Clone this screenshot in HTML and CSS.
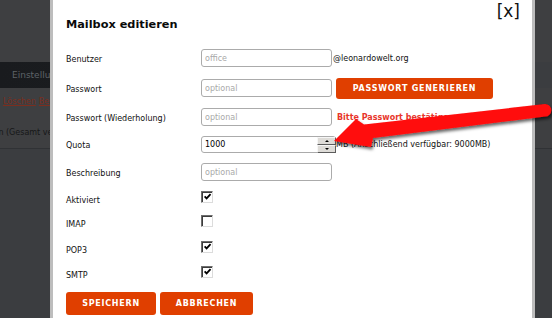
FILE: index.html
```html
<!DOCTYPE html>
<html lang="de">
<head>
<meta charset="utf-8">
<title>Mailbox editieren</title>
<link rel="stylesheet" href="styles.css">
</head>
<body>
<div class="page">
  <div class="page-top"></div>
  <div class="page-nav"><span class="nav-item">Einstellungen</span></div>
  <div class="page-actions"><a class="link">Löschen</a><a class="link">Bearbeiten</a></div>
  <div class="page-summary">Mailboxen (Gesamt verfügbar: 10000MB)</div>
  <div class="page-rule"></div>
</div>

<div class="modal">
  <button class="close" type="button">[x]</button>
  <h1 class="title">Mailbox editieren</h1>
  <form class="form">
    <div class="row row-30">
      <label class="label">Benutzer</label>
      <input class="field" type="text" placeholder="office">
      <span class="suffix suffix-domain">@leonardowelt.org</span>
    </div>
    <div class="row row-30">
      <label class="label">Passwort</label>
      <input class="field" type="text" placeholder="optional">
      <button class="btn btn-generate" type="button">PASSWORT GENERIEREN</button>
    </div>
    <div class="row row-28">
      <label class="label">Passwort (Wiederholung)</label>
      <input class="field" type="text" placeholder="optional">
      <span class="error">Bitte Passwort bestätigen</span>
    </div>
    <div class="row row-27">
      <label class="label">Quota</label>
      <span class="spin-field">
        <input class="field field-quota" type="text" value="1000">
        <span class="spinner">
          <span class="spin-btn"><span class="tri tri-up"></span></span>
          <span class="spin-btn"><span class="tri tri-down"></span></span>
        </span>
      </span>
      <span class="suffix">MB (Anschließend verfügbar: 9000MB)</span>
    </div>
    <div class="row row-28">
      <label class="label">Beschreibung</label>
      <input class="field" type="text" placeholder="optional">
    </div>
    <div class="row row-21 row-check">
      <label class="label">Aktiviert</label>
      <span class="cb"><svg viewBox="0 0 10 10" width="10" height="10"><path d="M1.8 4.2 L4 6.5 L8.4 1.8" fill="none" stroke="#000" stroke-width="2"/></svg></span>
    </div>
    <div class="row row-27 row-check">
      <label class="label">IMAP</label>
      <span class="cb"></span>
    </div>
    <div class="row row-25 row-check">
      <label class="label">POP3</label>
      <span class="cb"><svg viewBox="0 0 10 10" width="10" height="10"><path d="M1.8 4.2 L4 6.5 L8.4 1.8" fill="none" stroke="#000" stroke-width="2"/></svg></span>
    </div>
    <div class="row row-25 row-check">
      <label class="label">SMTP</label>
      <span class="cb"><svg viewBox="0 0 10 10" width="10" height="10"><path d="M1.8 4.2 L4 6.5 L8.4 1.8" fill="none" stroke="#000" stroke-width="2"/></svg></span>
    </div>
    <div class="actions">
      <button class="btn btn-save" type="button">SPEICHERN</button>
      <button class="btn btn-cancel" type="button">ABBRECHEN</button>
    </div>
  </form>
</div>

<svg class="arrow" width="552" height="318" viewBox="0 0 552 318">
  <defs>
    <filter id="shadow" x="-10%" y="-60%" width="125%" height="220%">
      <feDropShadow dx="1.5" dy="2.5" stdDeviation="1.5" flood-color="#000" flood-opacity="0.6"/>
    </filter>
  </defs>
  <path d="M545 104 A6.3 6.3 0 0 1 545 116.6 L373 138 L371 147 L334 141 L356 119 L364 124.5 Z" fill="#ff0a0a" filter="url(#shadow)"/>
</svg>
</body>
</html>
```

FILE: styles.css
```css
* { box-sizing: border-box; }

html, body {
  margin: 0;
  padding: 0;
}

body {
  position: relative;
  width: 552px;
  height: 318px;
  overflow: hidden;
  background: #3b3d40;
  font-family: "DejaVu Sans", Verdana, sans-serif;
  font-size: 8px;
  color: #111;
}

/* dimmed page behind the dialog */
.page-top {
  height: 62px;
  background: #3e3f41;
}

.page-nav {
  height: 26px;
  width: 520px;
  display: flex;
  align-items: center;
  padding-left: 12px;
  background: linear-gradient(90deg, #191b1e 0%, #202326 100%);
}

.nav-item {
  color: #5e6368;
  font-size: 9px;
}

.page-actions {
  height: 26px;
  display: flex;
  align-items: center;
  gap: 3px;
  padding-left: 3px;
  background: #3e3f41;
}

.link {
  color: #7c2e1e;
  text-decoration: underline;
}

.page-summary {
  height: 34px;
  padding-top: 14px;
  line-height: 10px;
  white-space: nowrap;
  text-indent: -37px;
  color: #161718;
  background: #3e3f41;
}

.page-rule {
  height: 1px;
  background: #303235;
}

/* dialog */
.modal {
  position: absolute;
  left: 50px;
  top: 0;
  bottom: 0;
  width: 485px;
  background: #fff;
  border-left: 3px solid #bdbdbd;
  border-right: 3px solid #bdbdbd;
  padding: 18px 0 0 13px;
}

.close {
  position: absolute;
  top: 1px;
  right: 12px;
  margin: 0;
  padding: 0;
  border: 0;
  background: none;
  font-family: "DejaVu Sans", Verdana, sans-serif;
  font-size: 17px;
  line-height: 20px;
  color: #111;
}

.title {
  margin: 0;
  font-size: 11.3px;
  line-height: 14px;
  font-weight: bold;
  color: #0a0a0a;
}

.form {
  margin-top: 11px;
}

.row {
  display: flex;
  align-items: center;
}

.row-30 { height: 30px; }
.row-28 { height: 28px; }
.row-27 { height: 27px; }
.row-25 { height: 25px; }
.row-21 { height: 21px; }

.label {
  width: 135px;
  flex: none;
  padding-top: 2px;
  white-space: nowrap;
}

.row-check .label {
  padding-top: 7px;
}

.field {
  width: 131px;
  height: 18px;
  margin: 0;
  padding: 0 3px;
  border: 1px solid #ababab;
  border-radius: 3px;
  background: #fff;
  font-family: "DejaVu Sans", Verdana, sans-serif;
  font-size: 8px;
  color: #000;
  outline: none;
}

.field::placeholder {
  color: #a9a9a9;
}

.spin-field {
  position: relative;
  display: block;
  height: 17px;
}

.field-quota {
  width: 135px;
  height: 17px;
}

.spinner {
  position: absolute;
  right: 0;
  top: 1px;
  bottom: 0;
  width: 19px;
  display: flex;
  flex-direction: column;
}

.spin-btn {
  flex: 1;
  display: flex;
  align-items: center;
  justify-content: center;
  background: #dedcd8;
  border: 1px solid;
  border-color: #f6f6f6 #5c5c5c #5c5c5c #f6f6f6;
}

.tri {
  width: 0;
  height: 0;
  border-left: 2px solid transparent;
  border-right: 2px solid transparent;
}

.tri-up { border-bottom: 2px solid #000; }
.tri-down { border-top: 2px solid #000; }

.suffix {
  white-space: nowrap;
  color: #111;
}

.suffix-domain {
  margin-left: 1px;
}

.error {
  margin-left: 5px;
  font-weight: bold;
  color: #e8362b;
  white-space: nowrap;
}

.btn {
  margin: 0;
  padding: 0;
  border: 0;
  border-radius: 3px;
  background: #e03f00;
  color: #fff;
  font-family: "DejaVu Sans", Verdana, sans-serif;
  font-size: 8px;
  font-weight: bold;
  letter-spacing: 0.75px;
}

.btn-generate {
  width: 157px;
  height: 21px;
  margin-left: 4px;
}

.cb {
  width: 12px;
  height: 12px;
  display: flex;
  align-items: center;
  justify-content: center;
  background: #fff;
  border: 1px solid;
  border-color: #6e6e6e #dcdcdc #dcdcdc #6e6e6e;
  box-shadow: inset 1px 1px 0 #3c3c3c;
}

.cb svg {
  display: block;
  margin: 1px 0 0 1px;
}

.actions {
  display: flex;
  gap: 4px;
  margin-top: 8px;
}

.btn-save {
  width: 90px;
  height: 23px;
}

.btn-cancel {
  width: 93px;
  height: 23px;
}

.arrow {
  position: absolute;
  left: 0;
  top: 0;
  pointer-events: none;
}
```
